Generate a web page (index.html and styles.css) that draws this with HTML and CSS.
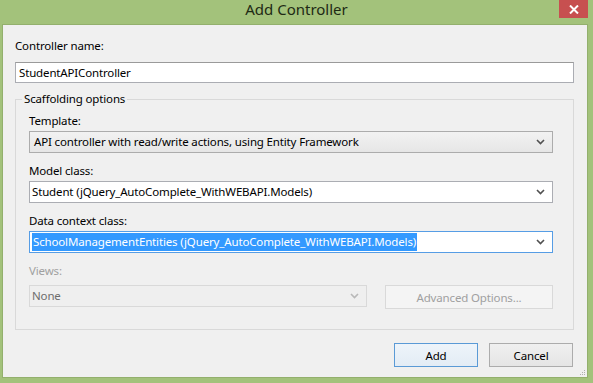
FILE: index.html
```html
<!DOCTYPE html>
<html lang="en">

<head>
    <meta charset="UTF-8">
    <meta name="viewport" content="width=device-width, initial-scale=1.0">
    <title>Add Controller</title>
    <link rel="stylesheet" href="styles.css">
</head>

<body>
    <div class="window">
        <div class="titlebar">
            <span></span>
            <h1 class="title">Add Controller</h1>
            <button class="close" title="Close">
                <svg width="10" height="9" viewBox="0 0 10 9">
                    <path d="M1 0.5 L9 8.5 M9 0.5 L1 8.5" stroke="#fff" stroke-width="2" />
                </svg>
            </button>
        </div>

        <div class="client">
            <div class="label">Controller name:</div>
            <div class="textbox">StudentAPIController</div>

            <fieldset class="group">
                <legend>Scaffolding options</legend>

                <div class="label">Template:</div>
                <div class="combo combo-list">
                    <span class="combo-text">API controller with read/write actions, using Entity Framework</span>
                    <svg class="chevron" width="9" height="6" viewBox="0 0 9 6">
                        <path d="M1 1 L4.5 4.5 L8 1" fill="none" stroke="#505050" stroke-width="1.6" />
                    </svg>
                </div>

                <div class="label">Model class:</div>
                <div class="combo">
                    <span class="combo-text">Student (jQuery_AutoComplete_WithWEBAPI.Models)</span>
                    <svg class="chevron" width="9" height="6" viewBox="0 0 9 6">
                        <path d="M1 1 L4.5 4.5 L8 1" fill="none" stroke="#505050" stroke-width="1.6" />
                    </svg>
                </div>

                <div class="label">Data context class:</div>
                <div class="combo combo-focus">
                    <span class="combo-text"><span class="selected">SchoolManagementEntities (jQuery_AutoComplete_WithWEBAPI.Models)</span></span>
                    <svg class="chevron" width="9" height="6" viewBox="0 0 9 6">
                        <path d="M1 1 L4.5 4.5 L8 1" fill="none" stroke="#505050" stroke-width="1.6" />
                    </svg>
                </div>

                <div class="label label-disabled">Views:</div>
                <div class="views-row">
                    <div class="combo combo-disabled">
                        <span class="combo-text">None</span>
                        <svg class="chevron" width="9" height="6" viewBox="0 0 9 6">
                            <path d="M1 1 L4.5 4.5 L8 1" fill="none" stroke="#b8b8b8" stroke-width="1.6" />
                        </svg>
                    </div>
                    <button class="btn btn-disabled">Advanced Options...</button>
                </div>
            </fieldset>

            <div class="footer">
                <button class="btn btn-default">Add</button>
                <button class="btn">Cancel</button>
            </div>

            <svg class="grip" width="7" height="7" viewBox="0 0 7 7">
                <rect x="5" y="1" width="1" height="1" fill="#b0b0b0" />
                <rect x="3" y="3" width="1" height="1" fill="#b0b0b0" />
                <rect x="5" y="3" width="1" height="1" fill="#b0b0b0" />
                <rect x="1" y="5" width="1" height="1" fill="#b0b0b0" />
                <rect x="3" y="5" width="1" height="1" fill="#b0b0b0" />
                <rect x="5" y="5" width="1" height="1" fill="#b0b0b0" />
            </svg>
        </div>
    </div>
</body>

</html>
```

FILE: styles.css
```css
:root {
    --frame: #a3c27b;
    --face: #f0f0f0;
    --text: #000000;
    --muted: #a0a0a0;
    --edge: #abadb3;
    --close: #c75050;
    --focus: #569de5;
    --highlight: #3399ff;
}

* {
    box-sizing: border-box;
}

body {
    margin: 0;
    background: var(--frame);
    font-family: 'Noto Sans', 'Segoe UI', sans-serif;
    font-size: 11.5px;
    letter-spacing: -0.15px;
    color: var(--text);
}

.window {
    width: 593px;
    height: 383px;
    display: flex;
    flex-direction: column;
    padding: 0 5px 5px 2px;
}

.titlebar {
    height: 24px;
    flex-shrink: 0;
    display: grid;
    grid-template-columns: 1fr auto 1fr;
    margin: 0 -5px 0 -2px;
}

.title {
    margin: 0;
    font-size: 15px;
    font-weight: normal;
    letter-spacing: 0;
    line-height: 19px;
    color: #1e2a14;
}

.close {
    justify-self: end;
    width: 29px;
    height: 18px;
    margin-right: 5px;
    padding: 0;
    border: none;
    background: var(--close);
    display: flex;
    align-items: center;
    justify-content: center;
}

.client {
    flex-grow: 1;
    position: relative;
    background: var(--face);
    border: 1px solid #93b06d;
    padding: 13px 13px 0 12px;
}

.label {
    line-height: 16px;
    margin-bottom: 2px;
}

.client > .label {
    margin-bottom: 8px;
}

.label-disabled {
    color: var(--muted);
    margin-bottom: 6px;
}

.textbox {
    height: 21px;
    background: #fff;
    border: 1px solid var(--edge);
    border-top-color: #9a9a9a;
    padding: 0 3px;
    line-height: 19px;
}

.group {
    margin: 8px 0 0;
    padding: 6px 20px 20px 13px;
    border: 1px solid #d9d9d9;
}

.group legend {
    margin-left: -7px;
    padding: 0 2px;
    line-height: 16px;
}

.combo {
    height: 22px;
    display: flex;
    align-items: center;
    background: #fff;
    border: 1px solid var(--edge);
    padding: 0 7px 0 2px;
    margin-bottom: 10px;
    line-height: 18px;
}

.combo-text {
    flex-grow: 1;
    white-space: nowrap;
}

.combo-list {
    background: linear-gradient(#f2f2f2, #e6e6e6);
    border-color: #acacac;
    padding-left: 4px;
}

.combo-focus {
    border-color: var(--focus);
}

.selected {
    background: var(--highlight);
    color: #fff;
    padding: 1px 1px 2px;
}

.views-row {
    display: flex;
    align-items: flex-start;
    gap: 18px;
}

.combo-disabled {
    width: 338px;
    margin-bottom: 0;
    background: #efefef;
    border-color: #d9d9d9;
    color: #6d6d6d;
}

.btn {
    height: 24px;
    width: 84px;
    padding: 0;
    font-family: inherit;
    font-size: 11.5px;
    letter-spacing: -0.15px;
    color: var(--text);
    background: linear-gradient(#f0f0f0, #e5e5e5);
    border: 1px solid #acacac;
}

.btn-disabled {
    width: 168px;
    background: #f4f4f4;
    border-color: #d9d9d9;
    color: var(--muted);
}

.btn-default {
    border-color: #5a9ad6;
    background: linear-gradient(#eef4fa, #e3ecf5);
}

.footer {
    display: flex;
    justify-content: flex-end;
    gap: 11px;
    margin: 13px 1px 0 0;
}

.grip {
    position: absolute;
    right: 1px;
    bottom: 1px;
}
```
